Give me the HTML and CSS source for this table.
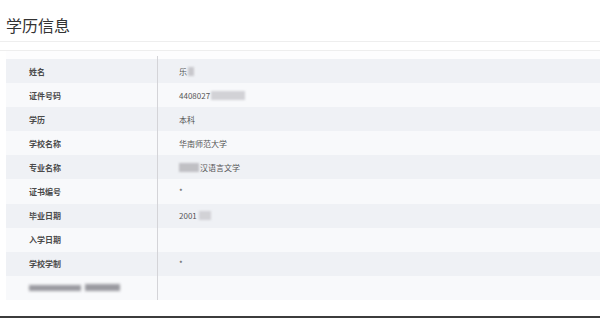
FILE: index.html
```html
<!DOCTYPE html>
<html lang="zh">
<head>
<meta charset="utf-8">
<link rel="stylesheet" href="styles.css">
</head>
<body>
<div class="page">
  <h1 class="title">学历信息</h1>
  <div class="rule"></div>
  <div class="panel">
    <div class="spacer"><div class="sp-left"></div><div class="sp-right"></div></div>
    <div class="row dark"><div class="label">姓名</div><div class="value">乐<span class="blur b-name"></span></div></div>
    <div class="row light"><div class="label">证件号码</div><div class="value">4408027<span class="blur b-id"></span></div></div>
    <div class="row dark"><div class="label">学历</div><div class="value">本科</div></div>
    <div class="row light"><div class="label">学校名称</div><div class="value">华南师范大学</div></div>
    <div class="row dark"><div class="label">专业名称</div><div class="value"><span class="blur b-major"></span>汉语言文学</div></div>
    <div class="row light"><div class="label">证书编号</div><div class="value">*</div></div>
    <div class="row dark"><div class="label">毕业日期</div><div class="value">2001<span class="blur b-date"></span></div></div>
    <div class="row light"><div class="label">入学日期</div><div class="value"></div></div>
    <div class="row dark"><div class="label">学校学制</div><div class="value">*</div></div>
    <div class="row light"><div class="label"><span class="blur b-l1"></span><span class="blur b-l2"></span></div><div class="value"></div></div>
  </div>
</div>
<div class="footer-bar"></div>
</body>
</html>
```
FILE: styles.css
```css
html, body {
  margin: 0;
  padding: 0;
  background: #ffffff;
}
body {
  width: 600px;
  height: 318px;
  overflow: hidden;
  font-family: "Noto Sans CJK SC", "Noto Sans", sans-serif;
}
.page {
  height: 316px;
}
.title {
  margin: 0;
  padding: 14px 0 0 6px;
  height: 27px;
  font-size: 16px;
  font-weight: 400;
  line-height: 22px;
  color: #333333;
  border-bottom: 1px solid #eeeeee;
}
.rule {
  height: 8px;
  border-bottom: 1px solid #eeeeee;
}
.panel {
  margin: 0 0 0 6px;
  width: 594px;
}
.spacer {
  display: flex;
  height: 8px;
  background: #fdfdfe;
}
.sp-left {
  width: 151px;
  margin-top: 5px;
  border-right: 1px solid #d4d4d8;
}
.row {
  display: flex;
  height: 24.1px;
  align-items: stretch;
}
.row.dark { background: #eff1f5; }
.row.light { background: #f8f9fb; }
.label {
  width: 128px;
  padding-left: 23px;
  border-right: 1px solid #d4d4d8;
  display: flex;
  align-items: center;
  font-size: 8px;
  font-weight: 700;
  color: #4a4a4a;
}
.value {
  flex: 1;
  padding-left: 21px;
  display: flex;
  align-items: center;
  font-size: 8px;
  color: #555555;
}
.blur {
  display: inline-block;
  height: 9px;
  background: #c8c8cc;
  filter: blur(1.2px);
}
.b-name { width: 6px; margin-left: 1px; }
.b-id { width: 34px; margin-left: 1px; background: #d2d2d6; }
.b-major { width: 20px; margin-right: 1px; background: #c0c0c4; }
.b-date { width: 12px; margin-left: 2px; background: #d2d2d6; }
.b-l1 { width: 52px; height: 6px; background: #9a9aa0; filter: blur(1.5px); }
.b-l2 { width: 35px; height: 7px; margin-left: 4px; background: #9a9aa0; filter: blur(1.5px); }
.footer-bar {
  height: 2px;
  background: #3c3c3c;
}
```
